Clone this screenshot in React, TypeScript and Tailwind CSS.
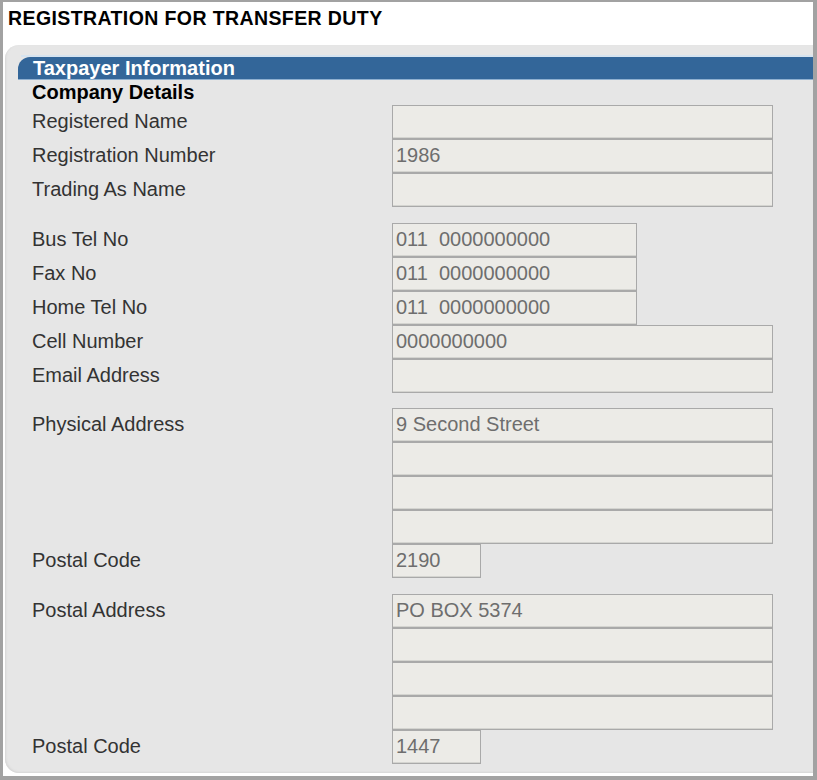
import React from "react";

type Field = { label?: string; value?: string; width: string };

// ============================================
// Form groups (each field is one 34px row)
// ============================================
const groups: Field[][] = [
  [
    { label: "Registered Name", width: "w-[381px]" },
    { label: "Registration Number", value: "1986", width: "w-[381px]" },
    { label: "Trading As Name", width: "w-[381px]" },
  ],
  [
    { label: "Bus Tel No", value: "011  0000000000", width: "w-[245px]" },
    { label: "Fax No", value: "011  0000000000", width: "w-[245px]" },
    { label: "Home Tel No", value: "011  0000000000", width: "w-[245px]" },
    { label: "Cell Number", value: "0000000000", width: "w-[381px]" },
    { label: "Email Address", width: "w-[381px]" },
  ],
  [
    { label: "Physical Address", value: "9 Second Street", width: "w-[381px]" },
    { width: "w-[381px]" },
    { width: "w-[381px]" },
    { width: "w-[381px]" },
    { label: "Postal Code", value: "2190", width: "w-[89px]" },
  ],
  [
    { label: "Postal Address", value: "PO BOX 5374", width: "w-[381px]" },
    { width: "w-[381px]" },
    { width: "w-[381px]" },
    { width: "w-[381px]" },
    { label: "Postal Code", value: "1447", width: "w-[89px]" },
  ],
];

const FieldRow = ({ field }: { field: Field }) => (
  <div className="flex h-[34px]">
    <div className="w-[360px] shrink-0 leading-[33px] text-[#333333]">
      {field.label}
    </div>
    <div
      className={`${field.width} h-[34px] border border-[#a9a9a9] bg-[#ecebe7] pl-[3px] leading-[31px] text-[#6e6e6e] whitespace-pre shadow-[inset_0_-1px_0_#d4d4d0]`}
    >
      {field.value}
    </div>
  </div>
);

export default function App() {
  return (
    <div
      className="w-[817px] h-[780px] flex flex-col bg-white border-t-2 border-l-[3px] border-r-4 border-b-4 border-[#a2a2a2] overflow-hidden text-[20px]"
      style={{ fontFamily: '"Liberation Sans", Arial, sans-serif' }}
    >
      <div className="h-[43px] shrink-0 pl-[5px] pt-[5px] text-[19.5px] font-bold tracking-[0.4px] leading-[22px] text-black">
        REGISTRATION FOR TRANSFER DUTY
      </div>

      <div className="flex-1 ml-[2px] mb-[3px] bg-[#e6e6e6] rounded-tl-[14px] rounded-bl-[14px] pt-[10px] pb-[9px] shadow-[inset_1px_-1px_2px_#d6d6d6]">
        <div className="h-[2px] ml-[16px] bg-[#d6e3ef]" />
        <div className="h-[23px] ml-[13px] rounded-tl-[12px] bg-[#336699] border-b border-[#8fb0d0] pl-[15px] font-bold text-white leading-[22px]">
          Taxpayer Information
        </div>

        <div className="pl-[27px]">
          <div className="h-[25px] font-bold text-black leading-[24px]">
            Company Details
          </div>

          <div className="flex flex-col">
            {groups.map((group, gi) => (
              <div
                key={gi}
                className={gi === 0 ? "" : gi === 2 ? "mt-[15px]" : "mt-[16px]"}
              >
                {group.map((field, fi) => (
                  <FieldRow key={fi} field={field} />
                ))}
              </div>
            ))}
          </div>
        </div>
      </div>
    </div>
  );
}
